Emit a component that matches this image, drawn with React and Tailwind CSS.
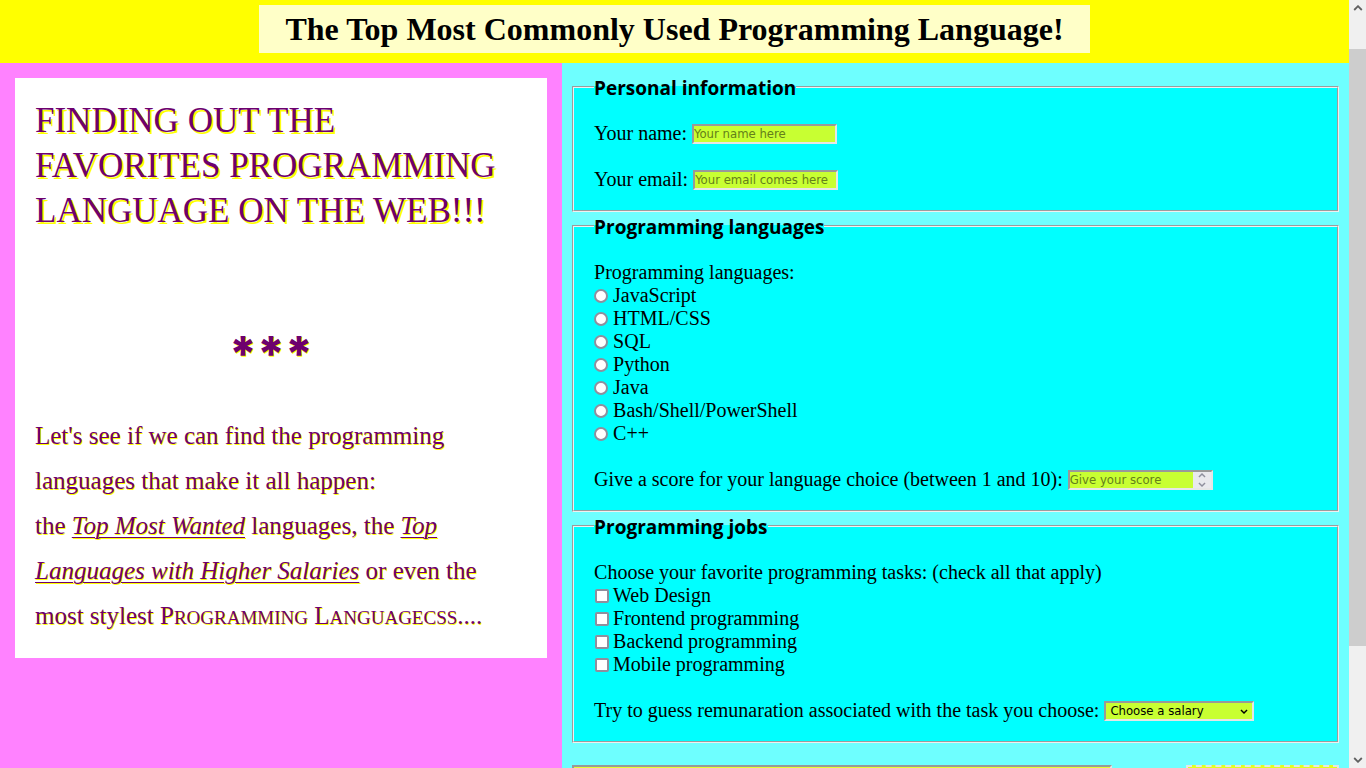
import React from "react";

const LANGUAGES = ["JavaScript", "HTML/CSS", "SQL", "Python", "Java", "Bash/Shell/PowerShell", "C++"];
const TASKS = ["Web Design", "Frontend programming", "Backend programming", "Mobile programming"];

const FIELD =
  "border-2 border-t-[#999] border-l-[#999] border-r-[#e6e6e6] border-b-[#e6e6e6] bg-[#c8ff32] font-['DejaVu_Sans_Condensed','Noto_Sans',sans-serif] text-[13px] leading-4";

function Chevron({ className, up = false }) {
  return (
    <svg viewBox="0 0 10 6" className={className} fill="none" stroke="currentColor" aria-hidden="true">
      <path d={up ? "M1.2 5 5 1.2 8.8 5" : "M1.2 1 5 4.8 8.8 1"} strokeWidth="1.8" />
    </svg>
  );
}

function Group({ title, children }) {
  return (
    <fieldset className="border-2 border-[#f0f0f0] bg-[#00ffff] px-5 pt-[22px] pb-[19px] [border-style:groove]">
      <legend className="pt-1 font-['Open_Sans','Noto_Sans',sans-serif] text-[19px] leading-[23px] font-bold">{title}</legend>
      {children}
    </fieldset>
  );
}

function TextField({ id, label, type, placeholder }) {
  return (
    <div className="flex items-center gap-[5px]">
      <label htmlFor={id}>{label}</label>
      <input id={id} type={type} placeholder={placeholder} className={`h-5 w-[145px] placeholder:text-[#64801a] ${FIELD}`} />
    </div>
  );
}

function Choice({ type, name, label }) {
  const shape = type === "radio" ? "rounded-full mr-[5px]" : "rounded-[2px] ml-px mr-1";
  return (
    <label className="flex items-center">
      <input type={type} name={name} className={`h-[14px] w-[14px] appearance-none border-2 border-[#8f8f9d] bg-white ${shape}`} />
      {label}
    </label>
  );
}

function Poster() {
  return (
    <section className="w-5/12 bg-[#ff82ff] p-[15px]">
      <div className="bg-white p-5 text-[25px] leading-[45px] text-[#6e006e] [text-shadow:1px_1px_#ffff00]">
        <h2 className="text-[35px] uppercase [text-shadow:2px_2px_#ffff00]">
          Finding out the favorites programming language on the web!!!
        </h2>
        <p className="mt-[98px] mb-[37px] pr-5 text-center font-['Inter',sans-serif] text-[48px] font-extrabold">***</p>
        <p>
          Let's see if we can find the programming languages that make it all happen:
          <br />
          the <em className="underline decoration-1 underline-offset-[3px]">Top Most Wanted</em> languages, the{" "}
          <em className="underline decoration-1 underline-offset-[3px]">Top Languages with Higher Salaries</em> or even the
          most stylest P<span className="text-[19px] leading-none uppercase">rogramming</span> L
          <span className="text-[19px] leading-none uppercase">anguagecss</span>....
        </p>
      </div>
    </section>
  );
}

function Survey() {
  return (
    <form className="w-7/12 bg-[#6effff] p-[10px] text-[20px] leading-[23px] text-black">
      <Group title="Personal information">
        <div className="flex flex-col gap-[23px]">
          <TextField id="name" label="Your name:" type="text" placeholder="Your name here" />
          <TextField id="email" label="Your email:" type="email" placeholder="Your email comes here" />
        </div>
      </Group>

      <Group title="Programming languages">
        <p>Programming languages:</p>
        {LANGUAGES.map((l) => (
          <Choice key={l} type="radio" name="language" label={l} />
        ))}
        <div className="mt-[23px] flex items-center gap-[5px]">
          <label htmlFor="score">Give a score for your language choice (between 1 and 10):</label>
          <div className={`flex h-5 w-[145px] ${FIELD}`}>
            <input
              id="score"
              type="number"
              min="1"
              max="10"
              placeholder="Give your score"
              className="min-w-0 flex-1 [appearance:textfield] placeholder:text-[#64801a]"
            />
            <div className="flex w-[18px] flex-col items-center justify-center gap-1 bg-[#e9e9ed] text-[#8f8f9d]">
              <button type="button" aria-label="Increase" className="block">
                <Chevron up className="block h-[5px] w-2" />
              </button>
              <button type="button" aria-label="Decrease" className="block">
                <Chevron className="block h-[5px] w-2" />
              </button>
            </div>
          </div>
        </div>
      </Group>

      <Group title="Programming jobs">
        <p>Choose your favorite programming tasks: (check all that apply)</p>
        {TASKS.map((t) => (
          <Choice key={t} type="checkbox" name="task" label={t} />
        ))}
        <div className="mt-[23px] flex items-center gap-[5px]">
          <label htmlFor="salary">Try to guess remunaration associated with the task you choose:</label>
          <div className="relative flex">
            <select id="salary" className={`h-5 w-[150px] appearance-none pl-1 ${FIELD}`}>
              <option>Choose a salary</option>
            </select>
            <Chevron className="pointer-events-none absolute top-2 right-[6px] h-[5px] w-2" />
          </div>
        </div>
      </Group>

      <div className="mt-[22px] flex items-start justify-between">
        <textarea
          aria-label="Comments"
          className="h-24 w-[540px] resize-none border-2 border-t-[#999] border-l-[#999] border-r-[#e6e6e6] border-b-[#e6e6e6] bg-[#e6ff32]"
        />
        <button type="submit" aria-label="Submit" className="h-12 w-[153px] border-2 border-dashed border-[#e6e6e6] bg-[#e1ff1e]" />
      </div>
    </form>
  );
}

function ScrollRail() {
  return (
    <div className="flex w-[17px] shrink-0 flex-col items-center bg-[#f0f0f0] text-[#606060]" aria-hidden="true">
      <div className="flex h-[49px] pt-[5px]">
        <Chevron up className="h-[6px] w-[10px]" />
      </div>
      <div className="h-[597px] w-full bg-[#cdcdcd]" />
      <div className="flex flex-1 items-end pb-[5px]">
        <Chevron className="h-[6px] w-[10px]" />
      </div>
    </div>
  );
}

export default function App() {
  return (
    <div className="flex h-screen overflow-hidden font-['Liberation_Serif',serif]">
      <div className="flex min-w-0 flex-1 flex-col">
        <header className="flex shrink-0 justify-center bg-[#ffff00] pt-[5px] pb-[10px]">
          <h1 className="bg-[#ffffc8] px-[26px] py-[5px] text-[32px] leading-[38px] font-bold text-black">
            The Top Most Commonly Used Programming Language!
          </h1>
        </header>
        <main className="flex flex-1">
          <Poster />
          <Survey />
        </main>
      </div>
      <ScrollRail />
    </div>
  );
}
